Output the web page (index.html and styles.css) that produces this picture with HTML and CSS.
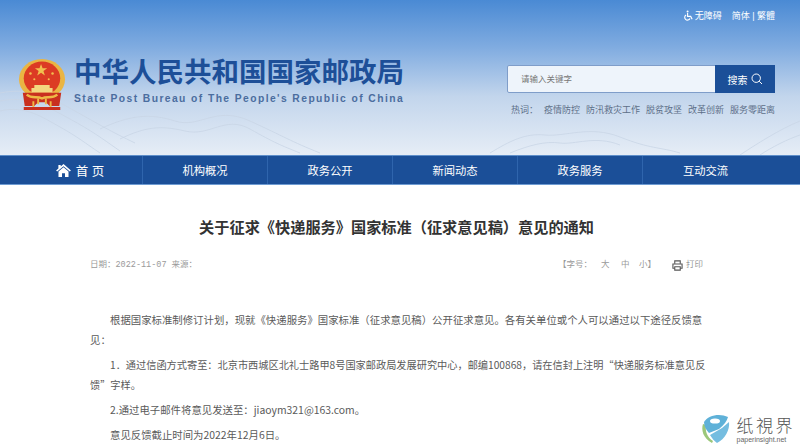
FILE: index.html
```html
<!DOCTYPE html>
<html lang="zh-CN">
<head>
  <meta charset="UTF-8" />
  <title>关于征求《快递服务》国家标准（征求意见稿）意见的通知</title>
  <link rel="stylesheet" href="styles.css">
</head>
<body>
  <header class="header">
    <svg class="waves" viewBox="0 0 800 70" preserveAspectRatio="none" fill="none" stroke="#c9d6e6" stroke-width="0.8">
      <path d="M0 8C30 2 50 12 75 26S110 46 135 58" />
      <path d="M0 16C28 10 48 22 70 34S100 52 120 66" />
      <path d="M0 26C25 20 42 32 60 42S85 58 100 68" />
      <path d="M100 44C130 30 150 28 175 36S215 20 250 36S290 56 320 68" />
      <path d="M120 54C145 42 160 40 185 46S225 30 250 44S280 60 300 68" />
      <path d="M490 68C510 56 525 48 545 50S590 40 620 52S660 62 680 68" />
      <path d="M510 68C530 60 545 56 560 58S595 50 620 60" />
      <path d="M740 70C755 60 780 44 800 36" />
      <path d="M760 70C772 62 788 54 800 50" />
    </svg>
    <div class="top-links">
      <svg class="icon-access" viewBox="0 0 12 12" fill="none" stroke="#fff" stroke-width="1.2">
        <circle cx="5" cy="1.6" r="1.1" fill="#fff" stroke="none" />
        <path d="M5 3.4V7H8.4L10 10.2" />
        <path d="M3.4 5.4A3 3 0 1 0 7.6 9.2" />
      </svg>
      <span>无障碍</span>
      <span class="lang">简体 | 繁體</span>
    </div>
    <div class="header-main">
      <div class="brand">
        <svg class="emblem" viewBox="0 0 50 54">
          <ellipse cx="25" cy="21" rx="24" ry="21" fill="#eab543" />
          <ellipse cx="25" cy="20" rx="19" ry="17.5" fill="#dc3b24" />
          <polygon points="24,5 25.6,9.6 30.4,9.6 26.5,12.4 28,17 24,14.2 20,17 21.5,12.4 17.6,9.6 22.4,9.6" fill="#f1c04f" />
          <circle cx="13" cy="15" r="1.3" fill="#f1c04f" />
          <circle cx="36" cy="15" r="1.3" fill="#f1c04f" />
          <circle cx="17" cy="21" r="1.1" fill="#f1c04f" />
          <circle cx="32" cy="21" r="1.1" fill="#f1c04f" />
          <path d="M17 27H33V30H36V35H14V30H17Z" fill="#f3d77f" />
          <path d="M5 35H45L43 49H33L29 45H21L17 49H7Z" fill="#c9301f" />
          <path d="M9 37C15 42 20 38 25 41C30 38 35 42 41 37" stroke="#eeb946" stroke-width="2.4" fill="none" />
          <path d="M21 41V47M29 41V47M16 44V50M34 44V50" stroke="#eeb946" stroke-width="2" />
          <path d="M6 50H44V53H6Z" fill="#c9301f" />
        </svg>
        <div class="brand-text">
          <div class="brand-cn">中华人民共和国国家邮政局</div>
          <div class="brand-en">State Post Bureau of The People's Republic of China</div>
        </div>
      </div>
      <div class="search-col">
        <div class="search">
          <div class="search-input">请输入关键字</div>
          <div class="search-btn">
            搜索
            <svg viewBox="0 0 12 12" fill="none" stroke="#fff" stroke-width="1">
              <circle cx="5.2" cy="5.2" r="4.2" />
              <path d="M8.2 8.2L11 11" />
            </svg>
          </div>
        </div>
        <div class="hot">
          <span class="hot-label">热词：</span>
          <span>疫情防控</span>
          <span>防汛救灾工作</span>
          <span>脱贫攻坚</span>
          <span>改革创新</span>
          <span>服务零距离</span>
        </div>
      </div>
    </div>
  </header>

  <nav class="nav">
    <a class="nav-item home">
      <svg viewBox="0 0 16 14" fill="#fff">
        <path d="M8 0L16 7L14.8 8.2L8 2.4L1.2 8.2L0 7L2.5 4.8V1H5V2.7Z" />
        <path d="M8 3.6L13.4 8.2V14H9.6V10H6.4V14H2.6V8.2Z" />
      </svg>
      首 页
    </a>
    <a class="nav-item">机构概况</a>
    <a class="nav-item">政务公开</a>
    <a class="nav-item">新闻动态</a>
    <a class="nav-item">政务服务</a>
    <a class="nav-item">互动交流</a>
  </nav>

  <main class="article">
    <h1 class="title">关于征求《快递服务》国家标准（征求意见稿）意见的通知</h1>
    <div class="meta">
      <span>日期：2022-11-07 来源：</span>
      <div class="tools">
        <span class="size-label">【字号：</span>
        <span class="size-big">大</span>
        <span class="size-mid">中</span>
        <span class="size-small">小】</span>
        <svg class="print" viewBox="0 0 12 12" fill="none" stroke="#555" stroke-width="1.2">
          <path d="M3 4V1H9V4" />
          <path d="M3 9H1V4.4H11V9H9" />
          <path d="M3 7.4H9V11H3Z" />
        </svg>
        <span>打印</span>
      </div>
    </div>
    <div class="content">
      <p>根据国家标准制修订计划，现就《快递服务》国家标准（征求意见稿）公开征求意见。各有关单位或个人可以通过以下途径反馈意见：</p>
      <p class="tight">1．通过信函方式寄至：北京市西城区北礼士路甲8号国家邮政局发展研究中心，邮编100868，请在信封上注明“快递服务标准意见反馈”字样。</p>
      <p>2.通过电子邮件将意见发送至：jiaoym321@163.com。</p>
      <p>意见反馈截止时间为2022年12月6日。</p>
    </div>
  </main>

  <div class="watermark">
    <svg viewBox="0 0 32 30">
      <path d="M5 10C3 16 5 24 14 29L15 27C9 23 7 17 8 11Z" fill="#9cc77a" />
      <path d="M6 8C10 1 22 -1 30 3C29 7 26 11 21 15L11 19C8 16 6 12 6 8Z" fill="#5fb1d8" />
      <ellipse cx="17" cy="7" rx="5" ry="2.6" fill="#fff" />
      <path d="M12 21L24 14L31 8C32 16 27 25 19 29C16 27 14 24 12 21Z" fill="#75bde0" />
    </svg>
    <div class="watermark-text">
      <div class="watermark-cn">纸視界</div>
      <div class="watermark-en">paperinsight.net</div>
    </div>
  </div>
</body>
</html>
```

FILE: styles.css
```css
* {
  box-sizing: border-box;
}

html, body {
  height: 447px;
  overflow: hidden;
}

body {
  margin: 0;
  background: #fff;
  font-family: "Liberation Sans", "Noto Sans CJK SC", sans-serif;
  color: #555;
  position: relative;
}

.header {
  position: relative;
  height: 155px;
  background: linear-gradient(180deg, #4a8ad4 0%, #7fabe0 30%, #c2d5ec 62%, #e6edf6 100%);
  padding: 9px 25px 0 0;
}

.waves {
  position: absolute;
  left: 0;
  bottom: 0;
  width: 100%;
  height: 70px;
}

.top-links {
  position: relative;
  display: flex;
  justify-content: flex-end;
  align-items: center;
  gap: 1px;
  height: 13px;
  font-size: 9px;
  color: #fff;
}

.icon-access {
  width: 11px;
  height: 11px;
}

.lang {
  margin-left: 9px;
}

.header-main {
  position: relative;
  display: flex;
  justify-content: space-between;
  padding-top: 35px;
}

.brand {
  display: flex;
  gap: 8px;
  padding-left: 18px;
}

.emblem {
  width: 48px;
  height: 52px;
  margin-top: 2px;
}

.brand-text {
  margin-top: -1px;
}

.brand-cn {
  font-size: 27.5px;
  font-weight: 700;
  line-height: 34px;
  color: #1d4f98;
  white-space: nowrap;
}

.brand-en {
  font-size: 10.3px;
  font-weight: 700;
  line-height: 14px;
  margin-top: 2px;
  letter-spacing: 1.42px;
  color: #4b6d9f;
  white-space: nowrap;
}

.search-col {
  width: 268px;
  padding-top: 8px;
}

.search {
  display: flex;
  height: 28px;
  border: 1px solid #7f9dc9;
  border-radius: 2px;
  background: #eef4fb;
}

.search-input {
  flex: 1;
  padding-left: 13px;
  font-size: 8.5px;
  line-height: 26px;
  color: #777;
}

.search-btn {
  width: 60px;
  margin: -1px -1px -1px 0;
  display: flex;
  align-items: center;
  justify-content: center;
  gap: 3px;
  background: #1b4f98;
  color: #fff;
  font-size: 10px;
}

.search-btn svg {
  width: 12px;
  height: 12px;
}

.hot {
  display: flex;
  justify-content: flex-end;
  gap: 6px;
  margin-top: 11px;
  padding-left: 6px;
  font-size: 9px;
  line-height: 12px;
  color: #5d6f88;
  white-space: nowrap;
}

.hot-label {
  margin-right: auto;
}

.nav {
  display: flex;
  height: 30px;
  padding-left: 18px;
  background: #1b4f98;
  border-top: 1px solid #5f8fca;
  border-bottom: 1px solid #6e9bd2;
}

.nav-item {
  width: 125px;
  display: flex;
  align-items: center;
  justify-content: center;
  gap: 5px;
  font-size: 11.3px;
  color: #fff;
  border-right: 1px solid #2f65ad;
}

.nav-item:last-child {
  border-right: none;
}

.home {
  font-size: 12.5px;
}

.home svg {
  width: 15px;
  height: 13px;
}

.article {
  padding: 0 97px 0 90px;
}

.title {
  margin: 33px 0 0;
  font-size: 15.2px;
  font-weight: 700;
  line-height: 20px;
  text-align: center;
  color: #333;
  white-space: nowrap;
}

.meta {
  display: flex;
  justify-content: space-between;
  margin-top: 21px;
  font-family: "Liberation Mono", "Noto Sans CJK SC", monospace;
  font-size: 8.5px;
  line-height: 12px;
  color: #9a9a9a;
}

.tools {
  display: flex;
  align-items: center;
}

.size-big {
  margin-left: 9px;
}

.size-mid {
  margin-left: 11.5px;
}

.size-small {
  margin-left: 9.5px;
}

.print {
  width: 11px;
  height: 11px;
  margin-left: 16px;
  margin-right: 3px;
}

.content {
  margin-top: 39px;
  font-family: "Noto Sans CJK SC", "Liberation Sans", sans-serif;
  font-size: 10.4px;
  line-height: 20px;
  color: #5a5a5a;
}

.content p {
  margin: 0 0 5px;
  text-indent: 20px;
}

.content p.tight {
  margin-right: -6px;
  font-size: 10.2px;
}

.watermark {
  position: absolute;
  right: 5px;
  bottom: 2px;
  display: flex;
  align-items: center;
  gap: 7px;
}

.watermark svg {
  width: 32px;
  height: 32px;
}

.watermark-cn {
  font-family: "Noto Sans CJK TC", sans-serif;
  font-size: 17px;
  font-weight: 300;
  letter-spacing: 2.5px;
  line-height: 21px;
  color: #555;
}

.watermark-en {
  font-size: 7px;
  line-height: 9px;
  color: #666;
}
```
